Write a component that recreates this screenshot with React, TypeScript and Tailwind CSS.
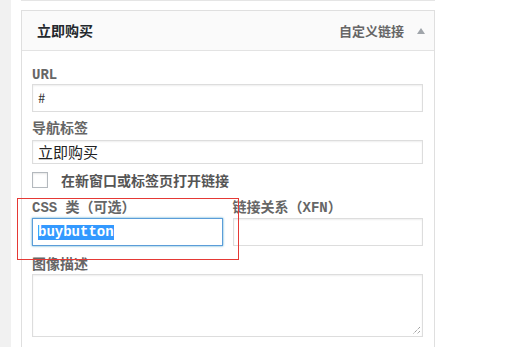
const labelFont = { fontFamily: '"Liberation Mono", "Noto Sans CJK SC", monospace' };

const Label = ({ children }: { children: React.ReactNode }) => (
    <div className="h-[18px] leading-[18px] text-[14px] font-semibold text-[#666]" style={labelFont}>
        {children}
    </div>
);

const App = () => {
    return (
        <div
            className="relative w-[527px] h-[347px] overflow-hidden bg-white flex"
            style={{ fontFamily: '"Noto Sans CJK SC", sans-serif' }}
        >
            {/* left admin strip */}
            <div className="w-[11px] bg-[#f1f1f1] shrink-0" />

            <div className="pl-[10px] flex flex-col">
                {/* previous panel bottom edge */}
                <div className="w-[414px] h-px bg-[#e5e5e5]" />

                <div className="mt-[9px] w-[414px] border border-[#dfdfdf] border-b-0 flex-1">
                    {/* header */}
                    <div className="h-[40px] bg-[#fafafa] border-b border-[#e3e3e3] flex items-center pl-[15px] pr-[9px]">
                        <span className="text-[14px] font-bold text-[#23282d]">立即购买</span>
                        <span className="ml-auto text-[13px] font-semibold text-[#666]">自定义链接</span>
                        <span className="ml-[13px] w-0 h-0 border-l-[4px] border-r-[4px] border-b-[6px] border-l-transparent border-r-transparent border-b-[#a0a5aa]" />
                    </div>

                    {/* body */}
                    <div className="pl-[10px] pr-[11px] pt-[15px]">
                        <Label>URL</Label>
                        <div className="h-[28px] border border-[#ddd] shadow-[inset_0_1px_2px_rgba(0,0,0,0.07)] flex items-center px-[5px] text-[13px] text-[#333]">
                            #
                        </div>

                        <div className="mt-[8px]">
                            <Label>导航标签</Label>
                        </div>
                        <div className="mt-[2px] h-[24px] border border-[#ddd] shadow-[inset_0_1px_2px_rgba(0,0,0,0.07)] flex items-center px-[5px] text-[15px] text-[#222]">
                            立即购买
                        </div>

                        <div className="mt-[8px] h-[16px] flex items-center gap-[13px]">
                            <div className="w-[16px] h-[16px] border border-[#b4b9be] bg-white shadow-[inset_0_1px_2px_rgba(0,0,0,0.1)]" />
                            <span className="leading-[16px] text-[14px] font-semibold text-[#555]">在新窗口或标签页打开链接</span>
                        </div>

                        <div className="mt-[11px] grid grid-cols-2 gap-x-[10px]">
                            <div>
                                <Label>CSS 类（可选）</Label>
                                <div className="mt-px h-[28px] border border-[#5b9dd9] shadow-[0_0_2px_rgba(30,140,190,0.8)] flex items-center px-[5px] text-[14px]" style={labelFont}>
                                    <span className="bg-[#3399ff] text-white font-semibold leading-[15px]">buybutton</span>
                                </div>
                            </div>
                            <div>
                                <Label>链接关系（XFN）</Label>
                                <div className="mt-px h-[28px] border border-[#ddd] shadow-[inset_0_1px_2px_rgba(0,0,0,0.07)]" />
                            </div>
                        </div>

                        <div className="mt-[10px]">
                            <Label>图像描述</Label>
                        </div>
                        <div className="relative h-[63px] border border-[#ddd] shadow-[inset_0_1px_2px_rgba(0,0,0,0.07)]">
                            <svg className="absolute right-[1px] bottom-[1px]" width="9" height="9" viewBox="0 0 9 9">
                                <path d="M8 1 L1 8 M8 5 L5 8" stroke="#777" strokeWidth="1" strokeDasharray="1 1" />
                            </svg>
                        </div>
                    </div>
                </div>
            </div>

            {/* red annotation box */}
            <div className="absolute left-[17px] top-[198px] w-[222px] h-[62px] border border-[#e53935]" />
        </div>
    );
};

export default App;
